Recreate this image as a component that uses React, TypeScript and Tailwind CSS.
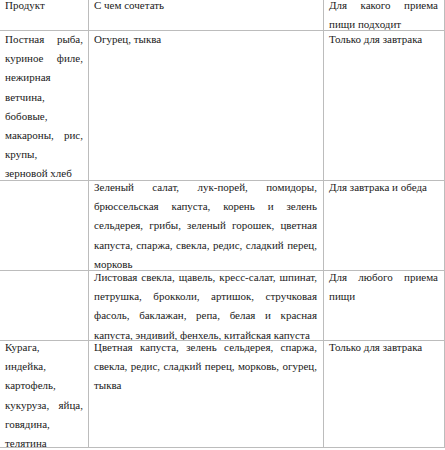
import React from "react";

interface Row {
  product: string[];
  pairs: string;
  meal: string;
  height: string;
  offset: string;
}

const rows: Row[] = [
  {
    product: ["Постная рыба,", "куриное филе,", "нежирная", "ветчина,", "бобовые,", "макароны, рис,", "крупы,", "зерновой хлеб"],
    pairs: "Огурец, тыква",
    meal: "Только для завтрака",
    height: "h-[150px]",
    offset: "-mt-[1px]",
  },
  {
    product: [],
    pairs:
      "Зеленый салат, лук-порей, помидоры, брюссельская капуста, корень и зелень сельдерея, грибы, зеленый горошек, цветная капуста, спаржа, свекла, редис, сладкий перец, морковь",
    meal: "Для завтрака и обеда",
    height: "h-[90px]",
    offset: "-mt-[3px]",
  },
  {
    product: [],
    pairs:
      "Листовая свекла, щавель, кресс-салат, шпинат, петрушка, брокколи, артишок, стручковая фасоль, баклажан, репа, белая и красная капуста, эндивий, фенхель, китайская капуста",
    meal: "Для любого приема пищи",
    height: "h-[70px]",
    offset: "-mt-[3px]",
  },
  {
    product: ["Курага,", "индейка,", "картофель,", "кукуруза, яйца,", "говядина,", "телятина"],
    pairs: "Цветная капуста, зелень сельдерея, спаржа, свекла, редис, сладкий перец, морковь, огурец, тыква",
    meal: "Только для завтрака",
    height: "h-[107px]",
    offset: "-mt-[3px]",
  },
];

// single words stay left, multi-word lines are spread like Word's justify
const ProductLines = ({ lines }: { lines: string[] }) => (
  <>
    {lines.map((line, i) => (
      <div
        key={i}
        className={i < lines.length - 1 && line.includes(" ") ? "[text-align-last:justify]" : "text-left"}
      >
        {line}
      </div>
    ))}
  </>
);

const Cell = ({
  children,
  className = "",
  offset = "-mt-[3px]",
}: {
  children: React.ReactNode;
  className?: string;
  offset?: string;
}) => (
  <div className={`border-b border-r border-[#bcbcbc] overflow-hidden ${className}`}>
    <div className={`${offset} text-justify`}>{children}</div>
  </div>
);

export default function App() {
  return (
    <div
      className="w-[445px] h-[450px] overflow-hidden bg-white text-[11px] leading-[19.2px] text-[#1a1a1a]"
      style={{ fontFamily: '"Liberation Serif", "Times New Roman", serif' }}
    >
      <div className="grid grid-cols-[89px_235px_121px] w-[445px]">
        <div className="h-[31px] border-b border-r border-[#bcbcbc] overflow-hidden pl-[5px] pr-[5px]">
          <div className="-mt-[4px]">Продукт</div>
        </div>
        <div className="h-[31px] border-b border-r border-[#bcbcbc] overflow-hidden pl-[5px] pr-[6px]">
          <div className="-mt-[4px]">С чем сочетать</div>
        </div>
        <div className="h-[31px] border-b border-r border-[#bcbcbc] overflow-hidden pl-[5px] pr-[6px]">
          <div className="-mt-[4px] text-justify">Для какого приема пищи подходит</div>
        </div>

        {rows.map((row, i) => (
          <React.Fragment key={i}>
            <Cell className={`${row.height} pl-[5px] pr-[5px]`} offset={row.offset}>
              <ProductLines lines={row.product} />
            </Cell>
            <Cell className={`${row.height} pl-[5px] pr-[6px]`} offset={row.offset}>
              {row.pairs}
            </Cell>
            <Cell className={`${row.height} pl-[5px] pr-[6px]`} offset={row.offset}>
              {row.meal}
            </Cell>
          </React.Fragment>
        ))}
      </div>
    </div>
  );
}
